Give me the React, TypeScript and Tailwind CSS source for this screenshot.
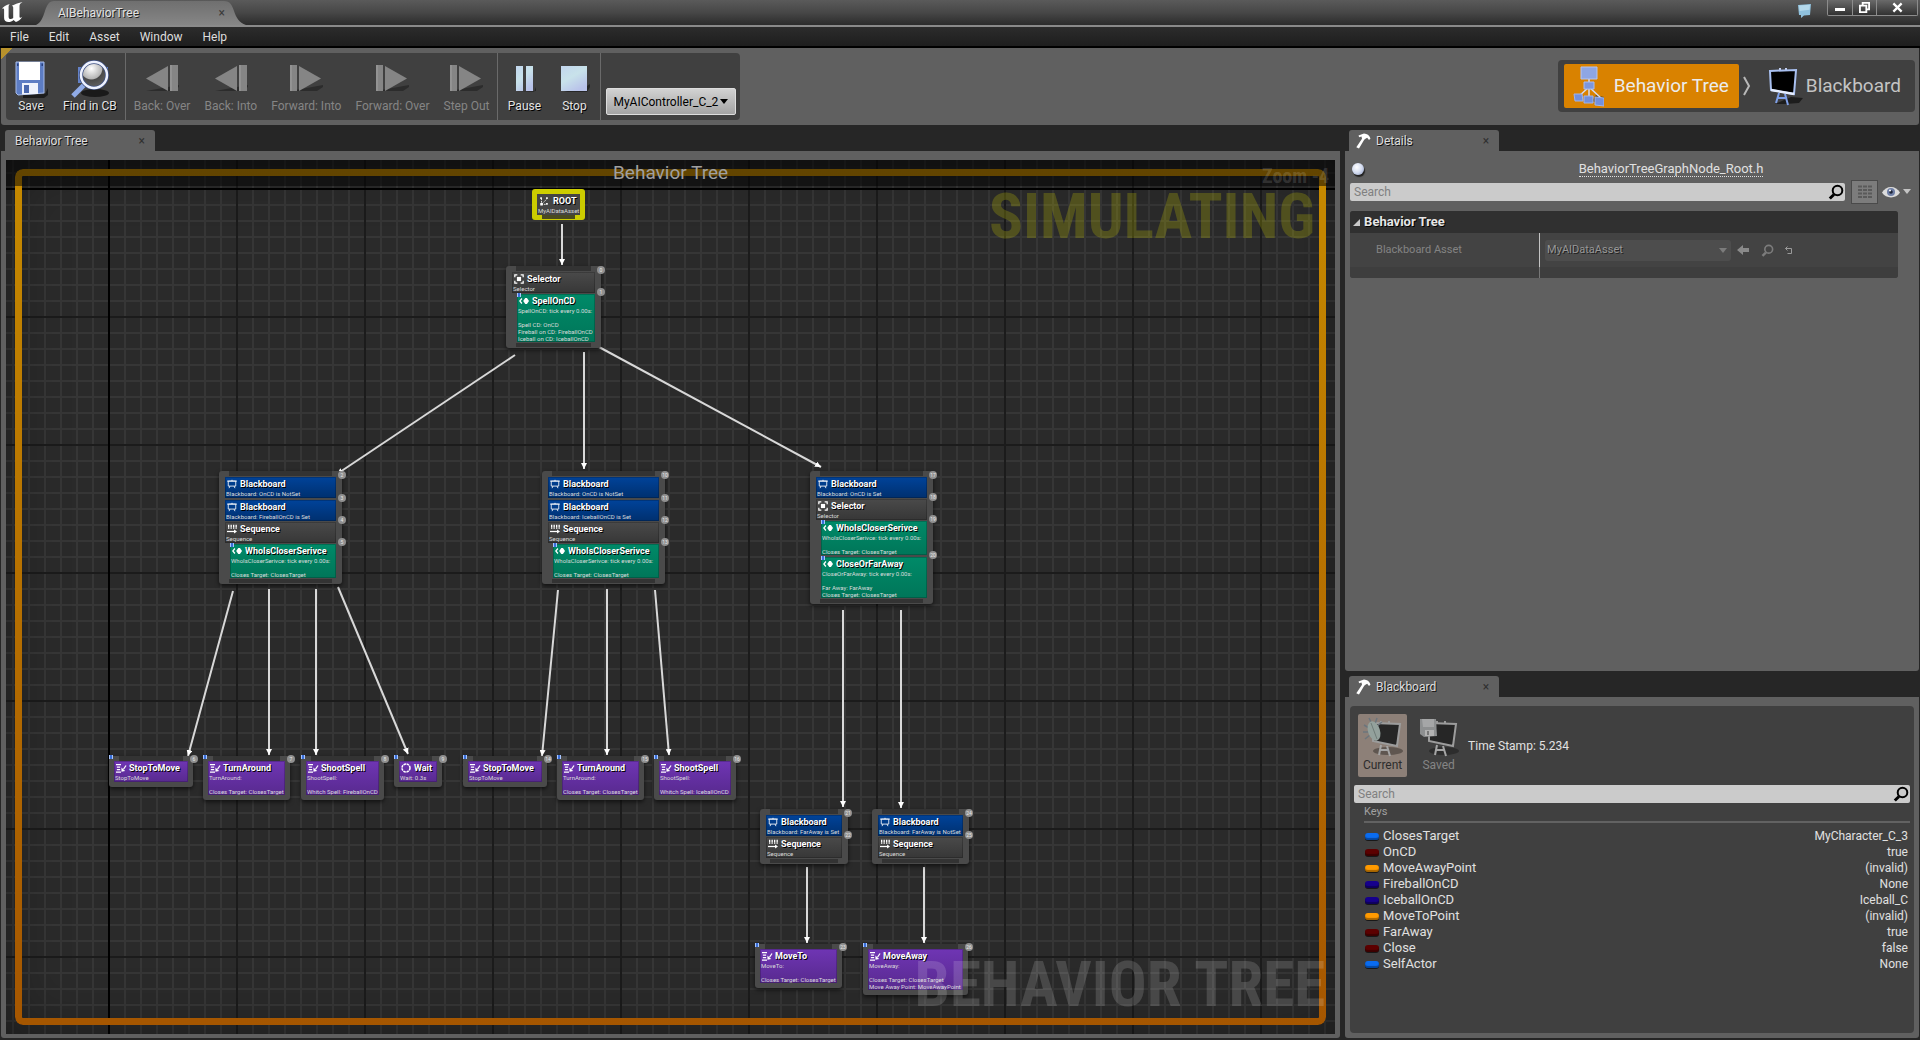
import React from "react";
import clsx from "clsx";

/* ---------------------------------------------------------------- icons */

function UnrealMark() {
  return (
    <svg viewBox="0 0 24 22" className="h-[22px] w-6 fill-white" aria-hidden="true">
      <path d="M1 9.500C3 5.500 6.500 3.500 10 3c-1 .8-1.400 1.500-1.400 3v9.500c0 1.800.8 2.600 2 2.600 1 0 1.800-.4 2.600-1V6.600c0-1-.5-1.500-1.400-1.800L17 2.600 22.500 1c-2 1.200-3 2.400-3 4v10.500c0 .9.4 1.200.9 1.200.5 0 1.100-.3 1.900-1-1.800 3-4 4.600-6.400 5.200l-2.400-2c-1.400 1.300-3.200 2.100-5 2.100-2.600 0-4.400-1.400-4.400-4V9c0-1-.3-1.400-1-1.400-.7 0-1.300.6-2.100 1.900z" />
    </svg>
  );
}

function SaveIcon() {
  return (
    <svg viewBox="0 0 40 40" className="size-10" aria-hidden="true">
      <path d="M12 36l22-1 3-6v7l-4 3H12z" fill="#1c1c1c" />
      <path d="M5 3h28v31l-26 2-2-2z" fill="#5d7dc4" stroke="#a8bce8" />
      <path d="M8 3h21v18H8z" fill="#fff" />
      <path d="M30.500 4.500h1.500V7h-1.500zM6 4.500h1.500V7H6z" fill="#27407e" />
      <path d="M11 24h16v11l-16 .5z" fill="#eef2fc" />
      <path d="M13 26h5v8h-5z" fill="#4b68ad" />
    </svg>
  );
}

function FindIcon() {
  return (
    <svg viewBox="0 0 40 40" className="size-10" aria-hidden="true">
      <defs>
        <radialGradient id="lens" cx=".4" cy=".25" r=".8">
          <stop offset="0" stopColor="#fff" />
          <stop offset=".5" stopColor="#b5b5b5" />
          <stop offset=".55" stopColor="#4a4a4a" />
          <stop offset="1" stopColor="#666" />
        </radialGradient>
      </defs>
      <ellipse cx="25" cy="34" rx="14" ry="4" fill="#1a1a1a" />
      <path d="M8 8h6v16H8zM34 8h4v14h-4z" fill="#6482c8" />
      <path d="M3 37l12-12" stroke="#90abe6" strokeWidth="5" />
      <circle cx="24" cy="16" r="13" fill="url(#lens)" stroke="#3d4f80" strokeWidth="4" />
      <circle cx="24" cy="16" r="13" fill="none" stroke="#eef2ff" strokeWidth="2.500" />
    </svg>
  );
}

function StepIcon({ back = false }: { back?: boolean }) {
  return (
    <svg viewBox="0 0 40 40" className="size-10" aria-hidden="true">
      <path d="M4 32h27l6-4v-2z" fill="#2c2c2c" />
      {back ? (
        <g fill="#858585">
          <path d="M26 7v25L4 19.500z" />
          <path d="M28 6h8v26h-8z" />
          <path d="M29 6v26" stroke="#a0a0a0" />
        </g>
      ) : (
        <g fill="#858585">
          <path d="M13 7v25l22-12.500z" />
          <path d="M4 6h7v26H4z" />
          <path d="M5 6v26" stroke="#a0a0a0" />
        </g>
      )}
    </svg>
  );
}

function PlayStateIcon({ stop = false }: { stop?: boolean }) {
  return (
    <svg viewBox="0 0 40 40" className="size-10" aria-hidden="true">
      <defs>
        <linearGradient id="ice" x1="0" y1="0" x2=".6" y2="1">
          <stop offset="0" stopColor="#c2d6ee" />
          <stop offset=".5" stopColor="#c8e2ea" />
          <stop offset="1" stopColor="#b9c3ea" />
        </linearGradient>
      </defs>
      <path d={stop ? "M10 33h23l3-5v-3l-3 2z" : "M13 33h17l2-5v4z"} fill="#262626" />
      {stop ? (
        <path d="M7 7h26v25H7z" fill="url(#ice)" />
      ) : (
        <path d="M12 7h7v25h-7zM22 7h7v25h-7z" fill="url(#ice)" />
      )}
    </svg>
  );
}

function TreeModeIcon() {
  return (
    <svg viewBox="0 0 40 44" className="h-11 w-10" aria-hidden="true">
      <path d="M28 37l14 5 2-8-12-3z" fill="#6b4a10" />
      <path d="M25 14v10M25 23L14 33M25 23v10M25 23l12 11" stroke="#d6dcf0" strokeWidth="1.500" fill="none" />
      <path d="M17 3h16v12H17z" fill="#8ea6e4" stroke="#b4c4f0" />
      <path d="M20 18h10v7H20z" fill="#7d97dc" stroke="#a9bbee" />
      <path d="M10 30h8l1 7h-8zM20 32h9v7h-9zM31 33l9 1v8l-9-1z" fill="#7390dc" stroke="#9fb4ec" />
    </svg>
  );
}

function BoardModeIcon() {
  return (
    <svg viewBox="0 0 40 44" className="h-11 w-10" aria-hidden="true">
      <path d="M12 40l16-7 12 1-4 5-14 1z" fill="#1d1d1d" />
      <path d="M17 8V4M23 8V4" stroke="#c5d0ee" strokeWidth="2" />
      <path d="M7 7l26-1-2 24-23-4z" fill="#000" stroke="#a9c0f0" strokeWidth="2" />
      <path d="M8 26l23 4" stroke="#e6eeff" strokeWidth="2.500" />
      <path d="M16 29l-3 10M22 30l3 11M14 34h10" stroke="#7fa0e8" strokeWidth="2" fill="none" />
    </svg>
  );
}

function DebugBoardIcon({ saved = false }: { saved?: boolean }) {
  return (
    <svg viewBox="0 0 40 40" className="size-10" aria-hidden="true">
      <ellipse cx="25" cy="34" rx="15" ry="4" fill={saved ? "#2d2d2d" : "#5f5650"} />
      <path d="M18 7V4M26 7V4" stroke="#999" strokeWidth="2" />
      <path d="M10 6l27 1-3 22-24-5z" fill="#262626" stroke="#9c9c9c" strokeWidth="2" />
      <path d="M18 28l-2 10M24 29l3 10M17 33h9" stroke="#a5a5a5" strokeWidth="2" fill="none" />
      {saved ? (
        <g>
          <path d="M1 2h16l1 17-13 1-4-3z" fill="#8d8f90" />
          <path d="M3 2h12v8H4z" fill="#a5a6a7" />
          <path d="M6 13h9v6H6z" fill="#b2b2b2" />
          <path d="M8 14h2v4H8z" fill="#777" />
        </g>
      ) : (
        <g>
          <path d="M1 8l5 3M6 1l3 6M14 1l-2 6M0 15h6M2 22l5-4M19 5l-5 4" stroke="#6c757c" strokeWidth="1.500" />
          <ellipse cx="11" cy="14" rx="6" ry="10" transform="rotate(-18 11 14)" fill="#93a19c" />
          <path d="M8 6l6 16" stroke="#6f7c78" />
        </g>
      )}
    </svg>
  );
}

function Hammer() {
  return (
    <svg viewBox="0 0 16 16" className="size-4 fill-white" aria-hidden="true">
      <path d="M3.500 2.500L9 .5c3 .2 5.500 1.800 6.500 5l-1.500 1.600-1.800-2.300-1.400.6-1.600 1.300L4 15.500l-2.700-1.300L7 5.700 6.500 3.500l-2.300.7z" />
    </svg>
  );
}

function Magnifier({ className }: { className: string }) {
  return (
    <svg viewBox="0 0 16 16" className={className} fill="none" stroke="currentColor" aria-hidden="true">
      <circle cx="9.500" cy="6.500" r="4.800" strokeWidth="2" />
      <path d="M6 10.500l-4.200 4" strokeWidth="3" />
    </svg>
  );
}

function Caret({ className }: { className: string }) {
  return (
    <svg viewBox="0 0 10 6" className={className} fill="currentColor" aria-hidden="true">
      <path d="M0 0h10L5 6z" />
    </svg>
  );
}

type Glyph = "root" | "selector" | "sequence" | "blackboard" | "service" | "task" | "wait";

function NodeGlyph({ kind }: { kind: Glyph }) {
  return (
    <svg viewBox="0 0 12 12" className="size-2.5 shrink-0 overflow-visible" fill="none" stroke="#fff" aria-hidden="true">
      {kind === "root" && (
        <g>
          <path d="M3 3v7M3 10h6M3 10l6-6" strokeWidth="1" strokeDasharray="2 1" />
          <path d="M1.500 8.500h3v3h-3zM1.500 1.500h2v2h-2zM8.500 1.500h2v2h-2zM8.500 8.500h2v2h-2z" fill="#fff" stroke="none" />
        </g>
      )}
      {kind === "selector" && (
        <g>
          <path d="M1 4V1h3M8 1h3v3M11 8v3H8M4 11H1V8" strokeWidth="1.500" />
          <path d="M3.500 3.500h5v5h-5z" fill="#fff" stroke="none" />
        </g>
      )}
      {kind === "sequence" && (
        <g>
          <path d="M2 1v5M5 1v5M8 1v5M11 1v5" strokeWidth="1.600" strokeDasharray="3.500 .5" />
          <path d="M0 9h10" strokeWidth="1.500" />
          <path d="M8.500 6.500L12 9l-3.500 2.500z" fill="#fff" stroke="none" />
        </g>
      )}
      {kind === "blackboard" && (
        <g>
          <path d="M0 2.500h12M1.500 2.500h9v6h-9zM6 2.500V1M3.500 8.500L2.500 11M8.500 8.500l1 2.500" strokeWidth="1" />
        </g>
      )}
      {kind === "service" && (
        <g>
          <path d="M3.500 3L1 6l2.500 3" strokeWidth="1.500" />
          <path d="M5 6l2.500-3.500h2L12 6 9.500 9.500h-2z" fill="#fff" stroke="none" />
        </g>
      )}
      {kind === "task" && (
        <g>
          <path d="M0 2h6M1 5h4M1 8h4M0 11h6" strokeWidth="1.500" />
          <path d="M12 3L9 7.500" strokeWidth="1.500" />
          <path d="M6.500 5.500l4.500 4-4.500 1z" fill="#fff" stroke="none" />
        </g>
      )}
      {kind === "wait" && <circle cx="6" cy="6" r="4.800" strokeWidth="1.800" strokeDasharray="3 .8" />}
    </svg>
  );
}

/* ---------------------------------------------------------------- graph */

type Row = { kind: Glyph; title: string; lines: string[]; badge?: number };
type GraphNode = { x: number; y: number; width: number; task?: boolean; rows: Row[] };

const closest = "Closes Target: ClosesTarget";

const who = (badge?: number): Row => ({
  kind: "service",
  title: "WhoIsCloserSerivce",
  lines: ["WhoIsCloserSerivce: tick every 0.00s:", "", closest],
  badge,
});
const board = (text: string, badge: number): Row => ({
  kind: "blackboard",
  title: "Blackboard",
  lines: ["Blackboard: " + text],
  badge,
});
const sequence = (badge: number): Row => ({ kind: "sequence", title: "Sequence", lines: ["Sequence"], badge });
const selector = (badge: number): Row => ({ kind: "selector", title: "Selector", lines: ["Selector"], badge });
const task = (x: number, y: number, width: number, title: string, lines: string[], badge: number, kind: Glyph = "task"): GraphNode => ({
  x,
  y,
  width,
  task: true,
  rows: [{ kind, title, lines, badge }],
});

const nodes: GraphNode[] = [
  {
    x: 500,
    y: 106,
    width: 95,
    rows: [
      selector(0),
      {
        kind: "service",
        title: "SpellOnCD",
        lines: ["SpellOnCD: tick every 0.00s:", "", "Spell CD: OnCD", "Fireball on CD: FireballOnCD", "Iceball on CD: IceballOnCD"],
        badge: 1,
      },
    ],
  },
  { x: 213, y: 311, width: 123, rows: [board("OnCD is NotSet", 2), board("FireballOnCD is Set", 3), sequence(4), who(5)] },
  { x: 536, y: 311, width: 123, rows: [board("OnCD is NotSet", 10), board("IceballOnCD is Set", 11), sequence(12), who(13)] },
  {
    x: 804,
    y: 311,
    width: 123,
    rows: [
      board("OnCD is Set", 17),
      selector(18),
      who(19),
      {
        kind: "service",
        title: "CloseOrFarAway",
        lines: ["CloseOrFarAway: tick every 0.00s:", "", "Far Away: FarAway", closest],
        badge: 20,
      },
    ],
  },
  task(103, 596, 84, "StopToMove", ["StopToMove"], 6),
  task(197, 596, 87, "TurnAround", ["TurnAround:", "", closest], 7),
  task(295, 596, 83, "ShootSpell", ["ShootSpell:", "", "Whitch Spell: FireballOnCD"], 8),
  task(388, 596, 48, "Wait", ["Wait: 0.3s"], 9, "wait"),
  task(457, 596, 84, "StopToMove", ["StopToMove"], 14),
  task(551, 596, 87, "TurnAround", ["TurnAround:", "", closest], 15),
  task(648, 596, 82, "ShootSpell", ["ShootSpell:", "", "Whitch Spell: IceballOnCD"], 16),
  { x: 754, y: 649, width: 88, rows: [board("FarAway is Set", 21), sequence(22)] },
  { x: 866, y: 649, width: 97, rows: [board("FarAway is NotSet", 24), sequence(25)] },
  task(749, 784, 87, "MoveTo", ["MoveTo:", "", closest], 23),
  task(857, 784, 105, "MoveAway", ["MoveAway:", "", closest, "Move Away Point: MoveAwayPoint"], 26),
];

const edges: [number, number, number, number][] = [
  [556, 64, 556, 105],
  [509, 195, 331, 314],
  [578, 192, 578, 309],
  [593, 187, 815, 307],
  [227, 431, 182, 596],
  [263, 429, 263, 595],
  [310, 429, 310, 595],
  [332, 427, 402, 594],
  [552, 430, 536, 596],
  [601, 429, 601, 595],
  [649, 430, 663, 595],
  [837, 450, 837, 647],
  [895, 450, 895, 648],
  [801, 707, 801, 783],
  [918, 707, 918, 783],
];

const rowTone: Record<Glyph, string> = {
  root: "bg-[#404040]",
  selector: "bg-linear-to-b from-[#4a4a4a] to-[#373737]",
  sequence: "bg-linear-to-b from-[#4a4a4a] to-[#373737]",
  blackboard: "bg-linear-to-b from-[#00439a] to-[#00306f]",
  service: "bg-linear-to-b from-[#008a68] to-[#007659]",
  task: "bg-linear-to-b from-[#6f35b4] to-[#582a8f]",
  wait: "bg-linear-to-b from-[#6f35b4] to-[#582a8f]",
};

function PausePip() {
  return (
    <span className="absolute -top-px left-0 flex h-1 w-1 justify-between bg-[#3a6fd8]">
      <span className="w-px bg-[#a8c6ff]" />
      <span className="w-px bg-[#a8c6ff]" />
    </span>
  );
}

function NodeRow({ row }: { row: Row }) {
  return (
    <div
      className={clsx(
        "relative pt-px whitespace-nowrap outline outline-black/20 -outline-offset-1",
        rowTone[row.kind],
        row.kind === "service" && "ml-[5px]",
        row.lines.length === 1 && "pb-px",
      )}
    >
      {row.kind === "service" && <PausePip />}
      <div className="flex h-3 items-center gap-[3px] pl-0.5">
        <NodeGlyph kind={row.kind} />
        <span className="text-[9px] leading-3 font-bold text-white [text-shadow:1px_1px_0_#000]">{row.title}</span>
      </div>
      {row.lines.map((line, i) => (
        <div key={i} className="h-[7px] pl-px text-[6px] leading-[7px] text-[#dcdcdc]">
          {line}
        </div>
      ))}
      {row.badge !== undefined && (
        <span className="absolute -top-1.5 -right-2.5 flex size-2 items-center justify-center rounded-full bg-[#909090] text-[5px] leading-none text-[#e8e8e8]">
          {row.badge}
        </span>
      )}
    </div>
  );
}

function BehaviorNode({ node }: { node: GraphNode }) {
  const decorators = node.rows.filter((r) => r.kind === "blackboard");
  const body = node.rows.filter((r) => r.kind !== "blackboard" && r.kind !== "service");
  const services = node.rows.filter((r) => r.kind === "service");
  return (
    <div className="absolute rounded-[3px] bg-[#4a4a4a] shadow-[0_2px_4px_rgba(0,0,0,0.6)]" style={{ left: node.x, top: node.y, width: node.width }}>
      {node.task && <PausePip />}
      <div className="mx-2.5 h-[5px] bg-[#333]" />
      <div className={clsx("flex flex-col gap-px", node.task ? "px-[5px] pb-[5px]" : "px-1.5 py-px")}>
        {decorators.length > 0 && (
          <div className="flex flex-col gap-0.5">
            {decorators.map((r) => (
              <NodeRow key={r.badge} row={r} />
            ))}
          </div>
        )}
        {body.map((r) => (
          <NodeRow key={r.badge} row={r} />
        ))}
        {services.length > 0 && (
          <div className="flex flex-col gap-0.5">
            {services.map((r) => (
              <NodeRow key={r.badge} row={r} />
            ))}
          </div>
        )}
      </div>
      {!node.task && <div className="mx-2.5 mb-px h-1 bg-[#333]" />}
    </div>
  );
}

function RootNode() {
  return (
    <div className="absolute top-[29px] left-[526px] w-[53px] rounded-[3px] bg-[#cccc00] px-[5px] pt-[5px] pb-px">
      <div className="bg-[#444] whitespace-nowrap">
        <div className="flex h-[13px] items-center gap-1 pl-0.5">
          <NodeGlyph kind="root" />
          <span className="text-[9px] leading-3 font-bold text-white [text-shadow:1px_1px_0_#000]">ROOT</span>
        </div>
        <div className="h-2 pl-px text-[6px] leading-[7px] text-[#dcdcdc]">MyAIDataAsset</div>
      </div>
      <div className="mx-[5px] h-1 bg-[#4a4a20]" />
    </div>
  );
}

function Graph() {
  return (
    <div className="relative min-h-0 flex-1 overflow-hidden bg-[#2a2a2a]">
      <div className="absolute inset-0 bg-[linear-gradient(to_right,#363636_2px,transparent_2px),linear-gradient(#363636_2px,transparent_2px)] bg-[size:16px_16px] bg-[position:6px_12px]" />
      <div className="absolute inset-0 bg-[linear-gradient(to_right,#1b1b1b_2px,transparent_2px),linear-gradient(#1b1b1b_2px,transparent_2px)] bg-[size:128px_128px] bg-[position:102px_28px]" />
      <div className="absolute inset-x-0 top-7 h-0.5 bg-black" />
      <div className="absolute inset-y-0 left-[102px] w-0.5 bg-black" />
      <div className="absolute inset-0 shadow-[inset_0_0_60px_rgba(0,0,0,0.35)]" />

      <svg className="absolute inset-0 size-full" aria-hidden="true">
        <defs>
          <marker id="tip" viewBox="0 0 6 6" refX="6" refY="3" markerWidth="6" markerHeight="6" markerUnits="userSpaceOnUse" orient="auto">
            <path d="M0 0l6 3-6 3z" fill="#fff" />
          </marker>
        </defs>
        {edges.map(([x1, y1, x2, y2], i) => (
          <line key={i} x1={x1} y1={y1} x2={x2} y2={y2} stroke="#d8d8d8" strokeWidth="2" markerEnd="url(#tip)" />
        ))}
      </svg>

      <RootNode />
      {nodes.map((n, i) => (
        <BehaviorNode key={i} node={n} />
      ))}

      <div className="pointer-events-none absolute inset-[9px] rounded-lg bg-linear-to-b from-[#c68a00] to-[#a55600] p-[7px] [mask:linear-gradient(#000_0_0)_content-box_exclude,linear-gradient(#000_0_0)]" />
      <div className="absolute inset-x-0 top-0 flex h-[26px] items-center justify-center bg-black/50 text-[19px] leading-6 text-[#a0a0a0]">
        Behavior Tree
      </div>
      <div className="absolute top-1 right-1.5 font-['Roboto_Condensed',Roboto,sans-serif] text-[20px] leading-6 font-bold text-white/15">Zoom -4</div>
      <div className="absolute top-6 right-5 font-['Roboto_Condensed',Roboto,sans-serif] text-[63px] leading-[66px] font-bold text-[#c8c800]/25">
        SIMULATING
      </div>
      <div className="absolute right-2.5 bottom-4 font-['Roboto_Condensed',Roboto,sans-serif] text-[63px] leading-[66px] font-bold text-white/15">
        BEHAVIOR TREE
      </div>
    </div>
  );
}

/* ---------------------------------------------------------------- chrome */

function PanelTab({ label, icon = false }: { label: string; icon?: boolean }) {
  return (
    <div className="ml-1 flex h-[21px] w-[150px] shrink-0 items-center gap-[5px] rounded-t-[3px] bg-[#606060] pr-2.5 pl-1.5 text-[12px] text-[#dedede]">
      {icon && <Hammer />}
      <span className={clsx("flex-1 leading-[14px] [text-shadow:1px_1px_0_#111]", !icon && "pl-1")}>{label}</span>
      <button type="button" aria-label={"Close " + label} className="text-[12px] leading-4 text-[#303030]">
        ×
      </button>
    </div>
  );
}

function ToolButton({ label, disabled = false, children }: { label: string; disabled?: boolean; children: React.ReactNode }) {
  return (
    <button
      type="button"
      disabled={disabled}
      className={clsx(
        "flex min-w-[50px] flex-col items-center px-[7px] pt-1.5 text-[12px] leading-[14px]",
        disabled ? "text-[#858585]" : "text-[#e4e4e4] [text-shadow:1px_1px_0_#000]",
      )}
    >
      <span className="-mx-1">{children}</span>
      {label}
    </button>
  );
}

function Divider() {
  return <div className="mx-px w-px bg-[#6a6a6a]" />;
}

function SearchBox({ name }: { name: string }) {
  return (
    <label className="flex h-[18px] flex-1 items-center rounded-xs bg-[#cbcbcb] pr-px pl-1">
      <input
        type="search"
        aria-label={name}
        placeholder="Search"
        className="min-w-0 flex-1 bg-transparent text-[12px] leading-4 text-black outline-none placeholder:text-[#808080]"
      />
      <Magnifier className="size-4 text-black" />
    </label>
  );
}

const keys = [
  ["ClosesTarget", "MyCharacter_C_3", "bg-[#0a6cf0]"],
  ["OnCD", "true", "bg-[#5c0000]"],
  ["MoveAwayPoint", "(invalid)", "bg-[#ff9a00]"],
  ["FireballOnCD", "None", "bg-[#16008c]"],
  ["IceballOnCD", "Iceball_C", "bg-[#16008c]"],
  ["MoveToPoint", "(invalid)", "bg-[#ff9a00]"],
  ["FarAway", "true", "bg-[#5c0000]"],
  ["Close", "false", "bg-[#5c0000]"],
  ["SelfActor", "None", "bg-[#0a6cf0]"],
];

function TitleBar() {
  return (
    <header className="flex h-[25px] shrink-0 items-end bg-linear-to-b from-[#5a5a5a] via-[#474747] to-[#2c2c2c]">
      <div className="w-9 self-start pt-px">
        <UnrealMark />
      </div>
      <div className="relative flex h-6 w-[210px] items-center pr-[21px] pl-[22px] text-[12px]">
        <svg viewBox="0 0 210 24" preserveAspectRatio="none" className="absolute inset-0 size-full" aria-hidden="true">
          <defs>
            <linearGradient id="tab" x1="0" y1="0" x2="0" y2="1">
              <stop offset="0" stopColor="#6f6f6f" />
              <stop offset="1" stopColor="#868686" />
            </linearGradient>
          </defs>
          <path d="M0 24c5-2 7-8 9-14s4-10 9-10h170c6 0 8 4 10 10s5 12 12 14z" fill="url(#tab)" />
        </svg>
        <span className="relative flex-1 text-[#e2e2e2] [text-shadow:1px_1px_0_#222]">AIBehaviorTree</span>
        <button type="button" aria-label="Close AIBehaviorTree" className="relative text-[12px] text-[#3a3a3a]">
          ×
        </button>
      </div>
      <div className="ml-auto flex self-start">
        <svg viewBox="0 0 16 16" className="mt-[3px] mr-3.5 size-4" aria-hidden="true">
          <path d="M1 2l13-1-1 11-6 .5L4 15l0-3H2z" fill="#8fc0dc" />
          <path d="M2 2.500l11-.8-.5 5L2.500 8z" fill="#b4d8ea" />
        </svg>
        <div className="mr-0.5 flex h-4 divide-x divide-[#8c8c8c] rounded-b-xs border border-t-0 border-[#8c8c8c] bg-linear-to-b from-[#6a6a6a] to-[#333]">
          <button type="button" aria-label="Minimize" className="flex w-[25px] justify-center">
            <span className="mt-2 h-[3px] w-2.5 bg-white" />
          </button>
          <button type="button" aria-label="Restore" className="flex w-6 justify-center">
            <svg viewBox="0 0 12 12" className="mt-0.5 size-[11px]" fill="none" stroke="#fff" strokeWidth="2" aria-hidden="true">
              <path d="M4 3V1h7v7H9M1 4h7v7H1z" />
            </svg>
          </button>
          <button type="button" aria-label="Close" className="flex w-10 justify-center">
            <svg viewBox="0 0 12 12" className="mt-0.5 size-[11px]" stroke="#fff" strokeWidth="2.500" aria-hidden="true">
              <path d="M1.500 1.500l9 9M10.500 1.500l-9 9" />
            </svg>
          </button>
        </div>
      </div>
    </header>
  );
}

function Toolbar() {
  return (
    <div className="mr-px ml-px flex h-[77px] shrink-0 items-start justify-between rounded-b-[3px] bg-[#606060] pt-[5px] pr-1 pl-[5px] [background-image:linear-gradient(135deg,#b8922c_8px,transparent_8px)]">
      <div className="flex h-[67px] rounded-[4px] bg-[#404040]">
        <ToolButton label="Save"><SaveIcon /></ToolButton>
        <ToolButton label="Find in CB"><FindIcon /></ToolButton>
        <Divider />
        <ToolButton label="Back: Over" disabled><StepIcon back /></ToolButton>
        <ToolButton label="Back: Into" disabled><StepIcon back /></ToolButton>
        <ToolButton label="Forward: Into" disabled><StepIcon /></ToolButton>
        <ToolButton label="Forward: Over" disabled><StepIcon /></ToolButton>
        <ToolButton label="Step Out" disabled><StepIcon /></ToolButton>
        <Divider />
        <ToolButton label="Pause"><PlayStateIcon /></ToolButton>
        <ToolButton label="Stop"><PlayStateIcon stop /></ToolButton>
        <Divider />
        <div className="relative mr-1 mb-[5px] ml-1 flex self-end">
          <select
            aria-label="Debugged controller"
            className="h-[27px] w-[130px] appearance-none rounded-xs border border-[#ddd] bg-linear-to-b from-[#d2d2d2] to-[#a4a4a4] pl-1.5 text-[12px] text-black"
          >
            <option>MyAIController_C_2</option>
          </select>
          <Caret className="pointer-events-none absolute top-[11px] right-2 h-[5px] w-2" />
        </div>
      </div>

      <nav className="mt-[7px] flex h-[52px] items-center rounded-[4px] bg-[#404040] pr-3.5 pl-1.5 text-[19px]">
        <button type="button" className="flex h-11 items-center gap-2.5 rounded-xs bg-[#d98200] pr-2.5 text-[#ececec]">
          <TreeModeIcon />
          Behavior Tree
        </button>
        <svg viewBox="0 0 8 20" className="mx-1 h-5 w-2" fill="none" stroke="#b8b8b8" strokeWidth="2" aria-hidden="true">
          <path d="M1 1l5 9-5 9" />
        </svg>
        <button type="button" className="flex h-11 items-center gap-[3px] pl-2 text-[#c4c4c4]">
          <BoardModeIcon />
          Blackboard
        </button>
      </nav>
    </div>
  );
}

function DetailsPanel() {
  return (
    <section className="flex min-h-0 flex-[512] flex-col rounded-b-[3px] bg-[#606060] px-[5px] pt-2">
      <div className="flex h-5 items-center">
        <span className="ml-0.5 size-3 rounded-full bg-radial-[at_40%_35%] from-white via-[#d4dcf0] to-[#8090b8] shadow-[1px_2px_1px_#222]" />
        <div className="flex flex-1 justify-center pl-16">
          <a href="#source" className="border-b border-dotted border-[#e0e0e0] text-[13px] leading-[14px] text-[#e0e0e0]">
            BehaviorTreeGraphNode_Root.h
          </a>
        </div>
      </div>
      <div className="flex h-6 items-center pt-px">
        <SearchBox name="Search details" />
        <button type="button" aria-label="Property matrix" className="ml-1.5 flex h-6 w-[27px] items-center justify-center border border-[#4a4a4a] bg-[#7c7c7c]">
          <svg viewBox="0 0 14 14" className="size-3.5" stroke="#5a5a5a" strokeWidth="2" aria-hidden="true">
            <path d="M0 1.500h4M5 1.500h4M10 1.500h4M0 5h4M5 5h4M10 5h4M0 8.500h4M5 8.500h4M10 8.500h4M0 12h4M5 12h4M10 12h4" />
          </svg>
        </button>
        <button type="button" aria-label="View options" className="mr-[3px] ml-1 flex items-center gap-[3px] text-[#c4c4c4]">
          <svg viewBox="0 0 18 12" className="h-3 w-[18px]" aria-hidden="true">
            <path d="M0 6.500C4-1 14-1 18 6.500 14 13 4 13 0 6.500z" fill="#dcdcdc" />
            <circle cx="9" cy="6" r="4" fill="#6f7fa6" />
            <circle cx="9" cy="6" r="1.800" fill="#1e2538" />
            <circle cx="8" cy="4.500" r="1" fill="#fff" />
          </svg>
          <Caret className="h-[5px] w-2" />
        </button>
      </div>
      <div className="mt-2 mr-4 overflow-hidden rounded-[3px] bg-[#434343] text-[11px]">
        <h2 className="flex h-[22px] items-center gap-1 bg-[#303030] pl-[3px] text-[13px] font-bold text-[#e6e6e6] [text-shadow:1px_1px_0_#000]">
          <svg viewBox="0 0 8 8" className="size-[7px] fill-[#c8c8c8]" aria-hidden="true">
            <path d="M8 0v8H0z" />
          </svg>
          Behavior Tree
        </h2>
        <div className="flex h-[34px]">
          <label htmlFor="asset" className="flex w-[190px] items-center border-r border-[#c4c4c4] pl-[26px] text-[#838383]">
            Blackboard Asset
          </label>
          <div className="flex flex-1 items-center pl-[5px] text-[#7c7c7c]">
            <div className="relative">
              <select id="asset" disabled className="block h-[21px] w-[186px] appearance-none rounded-[3px] bg-[#4d4d4d] pl-0.5 text-[11px] text-[#979797] [text-shadow:1px_1px_0_#222]">
                <option>MyAIDataAsset</option>
              </select>
              <Caret className="pointer-events-none absolute top-2 right-1 h-[5px] w-2" />
            </div>
            <button type="button" aria-label="Use selected asset" className="ml-1.5">
              <svg viewBox="0 0 12 12" className="size-3 fill-[#8a8a8a]" aria-hidden="true">
                <path d="M0 6l6-5v3h6v4H6v3z" />
              </svg>
            </button>
            <button type="button" aria-label="Browse to asset" className="ml-3">
              <Magnifier className="size-[13px]" />
            </button>
            <button type="button" aria-label="Reset to default" className="ml-2.5">
              <svg viewBox="0 0 10 10" className="size-2.5" fill="none" stroke="#9a9a9a" strokeWidth="1" aria-hidden="true">
                <path d="M1.500 3.500h6v5h-4M3.500 1.500l-2 2 2 2" />
              </svg>
            </button>
          </div>
        </div>
        <div className="h-[11px] bg-[#3e3e3e]">
          <div className="h-full w-[190px] border-r border-[#777]" />
        </div>
      </div>
    </section>
  );
}

function BlackboardPanel() {
  return (
    <section className="flex min-h-0 flex-[327] flex-col rounded-b-[3px] bg-[#606060] px-[5px] pt-[9px] pb-[5px]">
      <div className="flex-1 rounded-[4px] bg-[#404040] px-1 pt-2">
        <div className="flex items-start gap-[7px] pl-1 text-[12px] leading-4">
          <button type="button" className="flex h-[63px] w-[49px] flex-col items-center rounded-xs bg-[#8d8078] pt-[3px] text-[#2c2c2c]">
            <DebugBoardIcon />
            Current
          </button>
          <button type="button" disabled className="flex h-[63px] w-[49px] flex-col items-center pt-[3px] text-[#858585]">
            <DebugBoardIcon saved />
            Saved
          </button>
          <p className="-ml-0.5 self-center text-[#e2e2e2]">Time Stamp: 5.234</p>
        </div>
        <div className="mt-2 flex">
          <SearchBox name="Search keys" />
        </div>
        <h2 className="mb-[5px] ml-2.5 border-b-2 border-[#626262] text-[11px] leading-[18px] text-[#a0a0a0]">Keys</h2>
        <table className="w-full text-[#e0e0e0]">
          <tbody>
            {keys.map(([name, value, tone]) => (
              <tr key={name} className="h-4">
                <td className="flex items-center gap-1 pl-[11px] text-[13px] leading-4">
                  <span className={clsx("mt-px h-[7px] w-3.5 rounded-[3px] shadow-[inset_0_-2px_1px_rgba(0,0,0,0.35),0_1px_0_#181818]", tone)} />
                  {name}
                </td>
                <td className="pr-0.5 text-right text-[12px] leading-4">{value}</td>
              </tr>
            ))}
          </tbody>
        </table>
      </div>
    </section>
  );
}

export default function App() {
  return (
    <div className="flex h-screen flex-col overflow-hidden bg-[#262626] font-[Roboto,sans-serif]">
      <TitleBar />
      <nav className="flex h-[23px] shrink-0 items-center gap-5 border-y-2 border-t-[#8a8a8a] border-b-black bg-linear-to-b from-[#2c2c2c] to-[#1e1e1e] pl-2.5 text-[12px] text-[#dedede]">
        {["File", "Edit", "Asset", "Window", "Help"].map((item) => (
          <button key={item} type="button">
            {item}
          </button>
        ))}
      </nav>
      <Toolbar />
      <main className="grid min-h-0 flex-1 grid-cols-[7fr_3fr] gap-[5px] pt-[5px] pr-px pb-0.5 pl-px">
        <div className="flex min-h-0 flex-col">
          <PanelTab label="Behavior Tree" />
          <section className="flex min-h-0 flex-1 flex-col rounded-b-[3px] bg-[#606060] px-[5px] pt-[9px] pb-1">
            <Graph />
          </section>
        </div>
        <div className="flex min-h-0 flex-col">
          <PanelTab label="Details" icon />
          <DetailsPanel />
          <div className="h-[5px] shrink-0" />
          <PanelTab label="Blackboard" icon />
          <BlackboardPanel />
        </div>
      </main>
    </div>
  );
}
